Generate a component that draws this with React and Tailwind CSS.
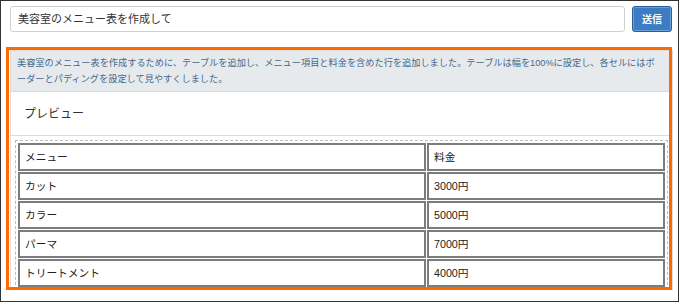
const rows = [
  ["カット", "3000円"],
  ["カラー", "5000円"],
  ["パーマ", "7000円"],
  ["トリートメント", "4000円"],
]

function Cell({ children }) {
  return (
    <td className="h-[28px] border-2 border-[#7c7c7c] px-[5px] py-0 text-[10.7px] text-[#222] align-middle">
      {children}
    </td>
  )
}

export default function App() {
  return (
    <div
      className="relative w-[679px] h-[302px] overflow-hidden border border-[#333] bg-white"
      style={{ fontFamily: '"Liberation Sans", "Noto Sans CJK JP", sans-serif' }}
    >
      <div className="flex gap-[7px] pt-[5px] pl-[9px] pr-[6px]">
        <div className="flex h-[26px] flex-1 items-center rounded-[3px] border border-[#d0d0d0] px-[7px] text-[11px] text-[#333]">
          美容室のメニュー表を作成して
        </div>
        <button className="h-[26px] w-[40px] rounded-[3px] border border-[#2a5f95] bg-[#3b7cc4] text-[10px] font-bold text-white shadow-[inset_0_0_0_1px_#6a9fd8]">
          送信
        </button>
      </div>

      <div className="mt-[18px] ml-[9px] mr-[5px] border border-b-0 border-[#dcdcdc]">
        <div className="border-b border-[#d3d8dd] bg-[#e7eaed] px-[6px] py-[4px] text-[9.2px] leading-[16px] text-[#44698a] whitespace-nowrap">
          美容室のメニュー表を作成するために、テーブルを追加し、メニュー項目と料金を含めた行を追加しました。テーブルは幅を100%に設定し、各セルにはボ
          <br />
          ーダーとパディングを設定して見やすくしました。
        </div>
        <div className="flex h-[44px] items-center border-b border-[#dcdcdc] px-[13px] text-[12px] text-[#333]">
          プレビュー
        </div>
        <div className="px-[4px] pt-[4px]">
          <div className="border border-dashed border-[#bdbdbd] p-px">
            <table className="w-full table-fixed border-separate border-spacing-px">
              <colgroup>
                <col className="w-[408px]" />
                <col />
              </colgroup>
              <tbody>
                <tr>
                  <Cell>メニュー</Cell>
                  <Cell>料金</Cell>
                </tr>
                {rows.map(([name, price]) => (
                  <tr key={name}>
                    <Cell>{name}</Cell>
                    <Cell>{price}</Cell>
                  </tr>
                ))}
              </tbody>
            </table>
          </div>
        </div>
      </div>

      {/* highlight annotation */}
      <div className="pointer-events-none absolute left-[5px] top-[46px] h-[243px] w-[666px] border-[3px] border-[#ff6a00]" />
    </div>
  )
}
